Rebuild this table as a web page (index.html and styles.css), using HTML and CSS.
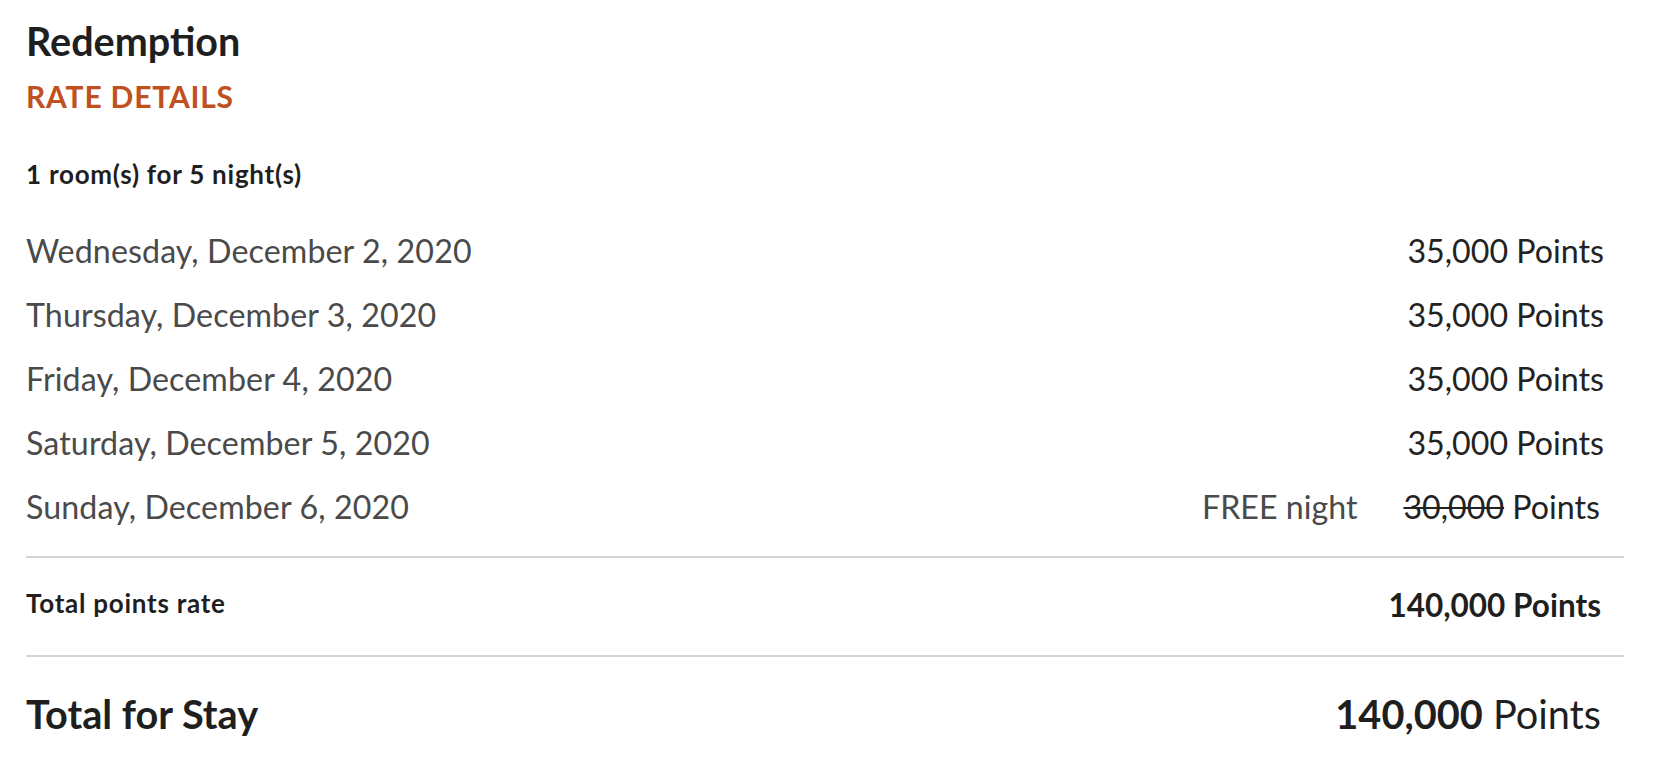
FILE: index.html
```html
<!DOCTYPE html>
<html>
<head>
<meta charset="utf-8">
<link rel="stylesheet" href="styles.css">
</head>
<body>
<section class="rate">
  <h1 class="title">Redemption</h1>
  <h2 class="subtitle">RATE DETAILS</h2>
  <p class="summary">1 room(s) for 5 night(s)</p>
  <ul class="nights">
    <li class="night"><span class="date">Wednesday, December 2, 2020</span><span class="pts">35,000 Points</span></li>
    <li class="night"><span class="date">Thursday, December 3, 2020</span><span class="pts">35,000 Points</span></li>
    <li class="night"><span class="date">Friday, December 4, 2020</span><span class="pts">35,000 Points</span></li>
    <li class="night"><span class="date">Saturday, December 5, 2020</span><span class="pts">35,000 Points</span></li>
    <li class="night"><span class="date">Sunday, December 6, 2020</span><span class="free">FREE night</span><span class="pts pts-free"><s>30,000</s> Points</span></li>
  </ul>
  <div class="subtotal"><span class="sub-label">Total points rate</span><span class="sub-value">140,000 Points</span></div>
  <div class="total"><span class="total-label">Total for Stay</span><span class="total-value"><b>140,000</b> Points</span></div>
</section>
</body>
</html>
```
FILE: styles.css
```css
* { box-sizing: border-box; }
body {
  margin: 0;
  background: #fff;
  font-family: "Lato", "Liberation Sans", sans-serif;
  color: #1f1f1f;
}
.rate {
  width: 1624px;
  padding-left: 26px;
  padding-top: 19px;
}
.title {
  margin: 0;
  font-size: 39.5px;
  font-weight: 700;
  line-height: 44px;
  color: #1f1f1f;
}
.subtitle {
  margin: 15px 0 0;
  font-size: 30px;
  letter-spacing: 0.8px;
  font-weight: 700;
  line-height: 36px;
  color: #c0501e;
}
.summary {
  margin: 45px 0 0;
  font-size: 26px;
  letter-spacing: 0.75px;
  font-weight: 700;
  line-height: 30px;
}
.nights {
  list-style: none;
  margin: 30px 0 0;
  padding: 0;
}
.night {
  display: flex;
  align-items: baseline;
  height: 64px;
  font-size: 32.2px;
  line-height: 64px;
  padding-right: 20px;
}
.date {
  flex: 1;
  color: #4a4a4a;
  letter-spacing: 0.1px;
}
.pts { color: #222; }
.free {
  color: #4a4a4a;
  margin-right: 46px;
}
.pts-free { padding-right: 4px; }
.pts-free s { text-decoration-thickness: 2px; }
.subtotal {
  display: flex;
  justify-content: space-between;
  align-items: flex-start;
  border-top: 2px solid #d4d4d4;
  border-bottom: 2px solid #d4d4d4;
  margin-top: 17px;
  padding: 25px 23px 30px 0;
}
.sub-label {
  font-size: 26px;
  letter-spacing: 0.75px;
  line-height: 40px;
  font-weight: 700;
}
.sub-value {
  margin-top: 2px;
  font-size: 31.5px;
  line-height: 40px;
  font-weight: 700;
}
.total {
  display: flex;
  justify-content: space-between;
  align-items: baseline;
  padding: 33px 23px 0 0;
  font-size: 39.7px;
  line-height: 48px;
}
.total-label { font-weight: 700; }
.total-value b { font-weight: 700; }
```
